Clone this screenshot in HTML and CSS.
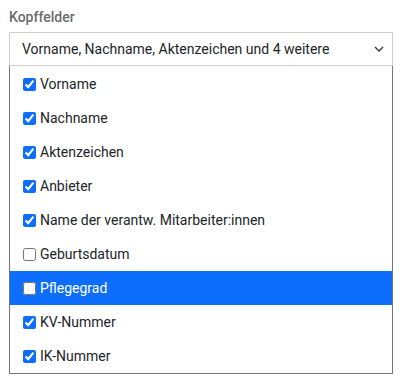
FILE: index.html
```html
<!DOCTYPE html>
<html lang="de">
<head>
    <meta charset="UTF-8">
    <meta name="viewport" content="width=device-width, initial-scale=1.0">
    <title>Kopffelder</title>
    <link rel="stylesheet" href="styles.css">
</head>
<body>
    <div class="field">
        <label class="field-label">Kopffelder</label>
        <div class="select-box">
            <span class="select-text">Vorname, Nachname, Aktenzeichen und 4 weitere</span>
            <svg class="chevron" width="10" height="6" viewBox="0 0 10 6">
                <path d="M1 1 L5 5 L9 1" fill="none" stroke="#333" stroke-width="1.3"/>
            </svg>
        </div>
        <ul class="options">
            <li class="option"><input type="checkbox" checked>Vorname</li>
            <li class="option"><input type="checkbox" checked>Nachname</li>
            <li class="option"><input type="checkbox" checked>Aktenzeichen</li>
            <li class="option"><input type="checkbox" checked>Anbieter</li>
            <li class="option"><input type="checkbox" checked>Name der verantw. Mitarbeiter:innen</li>
            <li class="option"><input type="checkbox">Geburtsdatum</li>
            <li class="option active"><input type="checkbox">Pflegegrad</li>
            <li class="option"><input type="checkbox" checked>KV-Nummer</li>
            <li class="option"><input type="checkbox" checked>IK-Nummer</li>
        </ul>
    </div>
</body>
</html>
```

FILE: styles.css
```css
body {
    margin: 0;
    padding: 9px;
    font-family: Roboto, "Noto Sans", sans-serif;
    font-size: 14px;
    color: #212529;
    background: #fff;
}

.field {
    width: 384px;
}

.field-label {
    display: block;
    font-weight: 500;
    color: #6b6b6b;
    line-height: 16px;
    margin-bottom: 7px;
}

.select-box {
    display: flex;
    align-items: center;
    justify-content: space-between;
    height: 34px;
    box-sizing: border-box;
    border: 1px solid #cfcfcf;
    padding: 0 4px 0 12px;
}

.chevron {
    margin-right: 4px;
}

.options {
    list-style: none;
    margin: 0;
    padding: 1px 0 0 0;
    border: 1px solid #767676;
    border-top: none;
}

.option {
    display: flex;
    align-items: center;
    height: 34px;
    padding-left: 12px;
}

.option input {
    width: 13px;
    height: 13px;
    margin: 0 4px 0 1px;
    accent-color: #0d6efd;
}

.option.active {
    background-color: #0d6efd;
    color: #fff;
}
```
